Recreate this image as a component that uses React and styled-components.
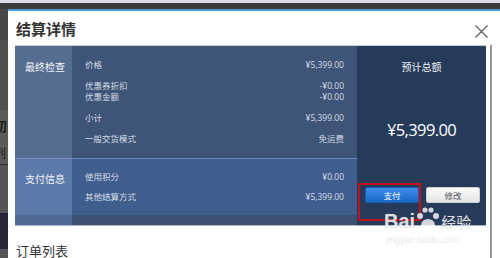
import React from 'react';
import styled, { createGlobalStyle } from 'styled-components';

const GlobalStyle = createGlobalStyle`
  html, body {
    margin: 0;
    padding: 0;
    width: 500px;
    height: 258px;
    overflow: hidden;
    background: #4a4a4a;
    font-family: "Open Sans", "Noto Sans CJK SC", sans-serif;
  }
`;

const Page = styled.div`
  width: 500px;
  height: 258px;
  display: flex;
  flex-direction: column;
  overflow: hidden;
`;

const TopStrip = styled.div`
  height: 3px;
  background: #dcdde9;
  border-bottom: 6px solid #3c3c3c;
  flex-shrink: 0;
`;

const Main = styled.div`
  flex: 1;
  display: flex;
  min-height: 0;
`;

const Behind = styled.div`
  width: 8px;
  flex-shrink: 0;
  background: #474747;
  display: flex;
  flex-direction: column;
  overflow: hidden;
`;

const BehindBlock = styled.div`
  flex-shrink: 0;
  height: ${p => p.h}px;
  background: ${p => p.bg};
  border-bottom: ${p => (p.line ? '1px solid #2e2e2e' : 'none')};
  color: #1d1d1d;
  font-family: "Noto Sans CJK SC", sans-serif;
  font-size: ${p => p.fs || 12}px;
  font-weight: ${p => p.fw || 400};
  line-height: ${p => p.h}px;
  white-space: nowrap;
  text-indent: -6px;
`;

const Modal = styled.div`
  flex: 1;
  background: #fff;
  border-top: 2px solid #4a9ad8;
  display: flex;
  flex-direction: column;
  position: relative;
`;

const Header = styled.div`
  height: 34px;
  display: flex;
  align-items: center;
  justify-content: space-between;
  padding: 0 12px 0 8px;
`;

const Title = styled.div`
  font-family: "Noto Sans CJK SC", sans-serif;
  font-size: 15px;
  font-weight: 700;
  color: #333;
`;

const Close = styled.svg`
  width: 13px;
  height: 13px;
  margin-top: 7px;
`;

const Body = styled.div`
  display: flex;
  padding-left: 7px;
  flex: 1;
  min-height: 0;
`;

const Content = styled.div`
  width: 471px;
  display: flex;
  flex-direction: column;
`;

const ScrollLine = styled.div`
  width: 2px;
  margin-left: 4px;
  background: #9a9a9a;
`;

const Panel = styled.div`
  display: grid;
  grid-template-columns: 57px 285px 129px;
  grid-template-rows: 112px 67px;
  border-top: 1px solid #c9ced8;
  border-bottom: 1px solid #aab6c8;
`;

const Label = styled.div`
  background: ${p => p.bg};
  color: #f4f6fa;
  font-family: "Noto Sans CJK SC", sans-serif;
  font-size: 10px;
  padding: ${p => p.pt}px 0 0 10px;
  border-top: ${p => (p.sep ? '1px solid #7690b8' : 'none')};
  box-shadow: ${p => (p.strip ? `inset 0 -10px 0 ${p.strip}` : 'none')};
`;

const Rows = styled.div`
  background: ${p => p.bg};
  padding: ${p => p.pt}px 13px 0 13px;
  display: flex;
  flex-direction: column;
  gap: ${p => p.gap}px;
  border-top: ${p => (p.sep ? '1px solid #6a86b0' : 'none')};
  box-shadow: ${p => (p.strip ? `inset 0 -10px 0 ${p.strip}` : 'none')};
`;

const Group = styled.div`
  display: flex;
  flex-direction: column;
`;

const Row = styled.div`
  display: flex;
  justify-content: space-between;
  height: 11px;
  line-height: 11px;
  font-size: 8.5px;
  color: #d4dbe7;
  font-family: "Open Sans", "Noto Sans CJK SC", sans-serif;
`;

const Summary = styled.div`
  grid-column: 3;
  grid-row: 1 / span 2;
  background: #263a5a;
  display: flex;
  flex-direction: column;
  align-items: center;
  color: #fff;
  position: relative;
`;

const SummaryTitle = styled.div`
  font-family: "Noto Sans CJK SC", sans-serif;
  font-size: 10px;
  margin-top: 13px;
  color: #eef1f6;
`;

const Total = styled.div`
  font-size: 16.5px;
  margin-top: 44px;
  letter-spacing: -0.6px;
`;

const Buttons = styled.div`
  display: flex;
  gap: 7px;
  margin-top: 46px;
  margin-left: 2px;
`;

const Button = styled.div`
  width: ${p => p.w}px;
  height: 16px;
  border-radius: 2px;
  display: flex;
  align-items: center;
  justify-content: center;
  font-family: "Noto Sans CJK SC", sans-serif;
  font-size: 8.5px;
  color: ${p => (p.primary ? '#fff' : '#555')};
  background: ${p => (p.primary ? 'linear-gradient(#3d8fe6, #1c67c8)' : 'linear-gradient(#fbfbfb, #e4e4e4)')};
  border: 1px solid ${p => (p.primary ? '#1a5cb0' : '#cfcfcf')};
  box-sizing: border-box;
`;

const Highlight = styled.div`
  position: absolute;
  left: 1px;
  top: 137px;
  width: 63px;
  height: 38px;
  border: 2px solid #c0121c;
  box-sizing: border-box;
`;

const SubTitle = styled.div`
  font-family: "Noto Sans CJK SC", sans-serif;
  font-size: 13px;
  color: #333;
  margin: 15px 0 0 1px;
`;

const Watermark = styled.div`
  position: absolute;
  left: 376px;
  top: 195px;
  color: rgba(255, 255, 255, 0.78);
  display: flex;
  flex-direction: column;
  align-items: flex-start;
  pointer-events: none;
`;

const MarkTop = styled.div`
  display: flex;
  align-items: flex-end;
  font-family: "Liberation Sans", sans-serif;
  font-weight: 700;
  font-size: 20px;
  line-height: 22px;
  text-shadow: 0 0 1px rgba(150, 150, 150, 0.6);
`;

const MarkCn = styled.span`
  font-family: "Noto Sans CJK SC", sans-serif;
  font-size: 15px;
  font-weight: 400;
  line-height: 20px;
  margin-left: 2px;
`;

const MarkUrl = styled.div`
  font-family: "Liberation Sans", sans-serif;
  font-size: 9px;
  color: rgba(225, 225, 225, 0.75);
  margin: 3px 0 0 2px;
`;

export default function App() {
  return (
    <Page>
      <GlobalStyle />
      <TopStrip />
      <Main>
        <Behind>
          <BehindBlock h={31} bg="#474747" />
          <BehindBlock h={70} bg="#505050" />
          <BehindBlock h={32} bg="#5a5a5a" fs={13} fw={700}>初</BehindBlock>
          <BehindBlock h={22} bg="#5a5a5a" line>列</BehindBlock>
          <BehindBlock h={48} bg="#555" />
          <BehindBlock h={36} bg="#2a2438" />
          <BehindBlock h={20} bg="#555" />
        </Behind>
        <Modal>
          <Header>
            <Title>结算详情</Title>
            <Close viewBox="0 0 13 13">
              <path d="M0.5 0.5 L12.5 12.5 M12.5 0.5 L0.5 12.5" stroke="#555" strokeWidth="1.1" fill="none" />
            </Close>
          </Header>
          <Body>
            <Content>
              <Panel>
                <Label bg="#566d92" pt={13}>最终检查</Label>
                <Rows bg="#3e5577" pt={13} gap={10}>
                  <Row><span>价格</span><span>¥5,399.00</span></Row>
                  <Group>
                    <Row><span>优惠券折扣</span><span>-¥0.00</span></Row>
                    <Row><span>优惠金额</span><span>-¥0.00</span></Row>
                  </Group>
                  <Row><span>小计</span><span>¥5,399.00</span></Row>
                  <Row><span>一般交货模式</span><span>免运费</span></Row>
                </Rows>
                <Summary>
                  <SummaryTitle>预计总额</SummaryTitle>
                  <Total>¥5,399.00</Total>
                  <Buttons>
                    <Button primary w={54}>支付</Button>
                    <Button w={54}>修改</Button>
                  </Buttons>
                  <Highlight />
                </Summary>
                <Label bg="#5b79a9" pt={12} sep strip="#4f6a94">支付信息</Label>
                <Rows bg="#405e8d" pt={12} gap={9} sep strip="#3b5072">
                  <Row><span>使用积分</span><span>¥0.00</span></Row>
                  <Row><span>其他结算方式</span><span>¥5,399.00</span></Row>
                </Rows>
              </Panel>
              <SubTitle>订单列表</SubTitle>
            </Content>
            <ScrollLine />
          </Body>
          <Watermark>
            <MarkTop>
              Bai
              <svg width="24" height="26" viewBox="0 0 24 26">
                <circle cx="5" cy="10" r="3" fill="rgba(255,255,255,0.8)" />
                <circle cx="10" cy="4" r="2.6" fill="rgba(255,255,255,0.8)" />
                <circle cx="16" cy="4" r="2.6" fill="rgba(255,255,255,0.8)" />
                <circle cx="21" cy="10" r="3" fill="rgba(255,255,255,0.8)" />
                <ellipse cx="13" cy="19" rx="7" ry="6" fill="rgba(255,255,255,0.8)" />
              </svg>
              <MarkCn>经验</MarkCn>
            </MarkTop>
            <MarkUrl>jingyan.baidu.com</MarkUrl>
          </Watermark>
        </Modal>
      </Main>
    </Page>
  );
}
